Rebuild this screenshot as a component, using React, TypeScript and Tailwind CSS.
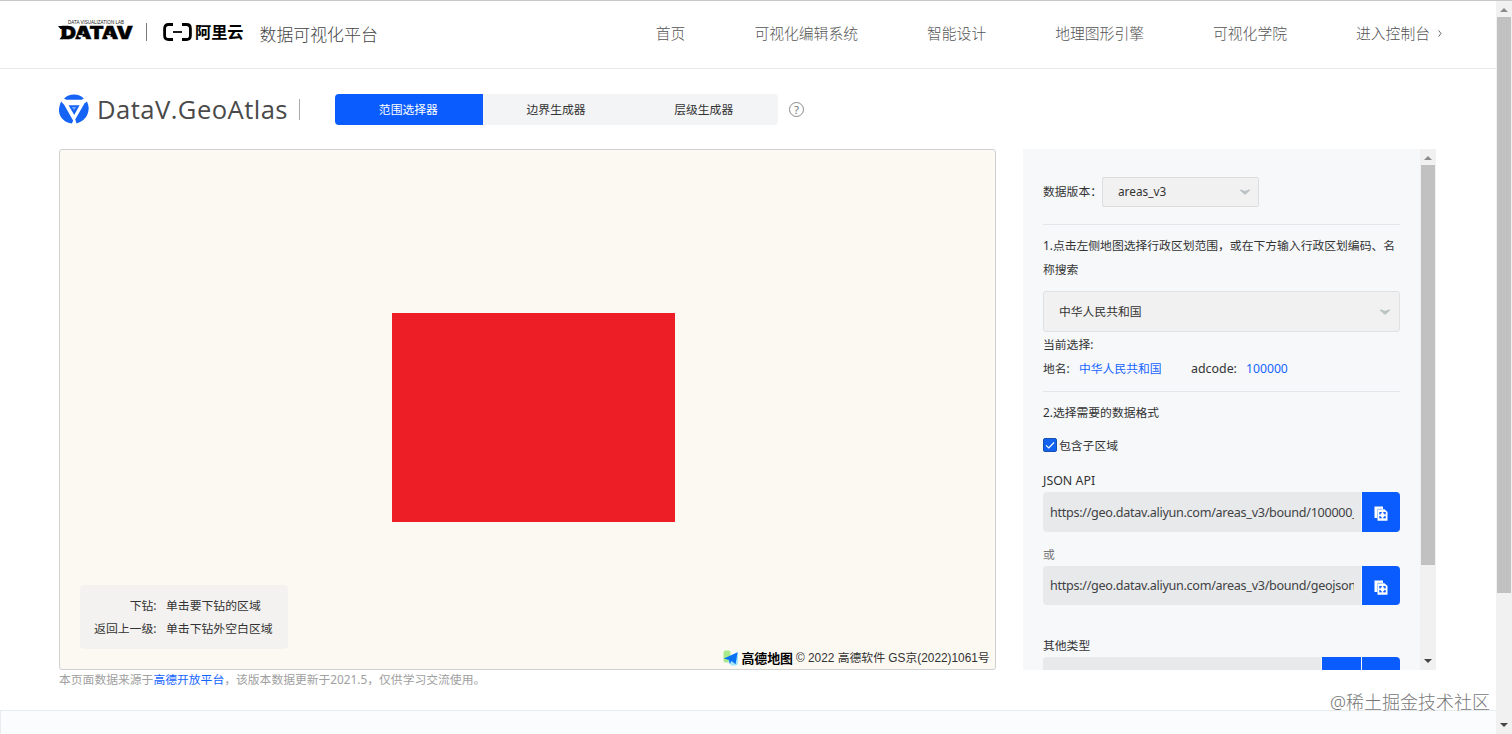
import React from 'react';

const NAV_ITEMS = ['首页', '可视化编辑系统', '智能设计', '地理图形引擎', '可视化学院', '进入控制台'];
const TABS = ['范围选择器', '边界生成器', '层级生成器'];

const DatavLogo = () => (
  <svg className="w-[76px] h-[24px]" viewBox="0 0 76 24">
    <text x="10" y="5.2" fontSize="5" textLength="56" lengthAdjust="spacingAndGlyphs" fill="#222" fontFamily="Liberation Sans">
      DATA VISUALIZATION LAB
    </text>
    <text x="3" y="20" fontSize="17.6" fontWeight="900" textLength="72" lengthAdjust="spacingAndGlyphs" fill="#000" stroke="#000" strokeWidth="0.5" fontFamily="Inter">
      DATAV
    </text>
    <path d="M0 7H8V10H2.5Z" />
    <path d="M1.5 20.2L4.5 16.5V20.2Z" />
    <path d="M20 16.2H25L24 18.2H21Z M48 16.2H53L52 18.2H49Z" fill="#fff" />
  </svg>
);

const AliyunLogo = () => (
  <div className="flex items-center">
    <svg className="w-[29px] h-[18px]" viewBox="0 0 29 18" fill="none" stroke="#000" strokeWidth="2.8">
      <path d="M10 1.5H5.5Q1.6 1.5 1.6 5.5V12.5Q1.6 16.5 5.5 16.5H10" />
      <path d="M19 1.5H23.5Q27.4 1.5 27.4 5.5V12.5Q27.4 16.5 23.5 16.5H19" />
      <path d="M10 9H19" strokeWidth="1.8" />
    </svg>
    <span className="ml-[3px] text-[16.2px] leading-[20px] font-bold text-black">阿里云</span>
  </div>
);

const GeoAtlasLogo = () => (
  <svg className="w-[30px] h-[30px] -mt-[2px]" viewBox="0 0 30 30" fill="#1664f5">
    <path d="M5 4.6Q9 0.5 15 0.5T24.8 4.4L22.6 5.8H7.4Z" />
    <path d="M2 7.4L5 10.5 14.2 26.8 12.8 29.4Q5.5 28.6 1.9 23T1.2 10Z" />
    <path d="M28 7.4Q31 13.5 28.6 20T17.6 29.4L16.2 25.4 25.4 9.4Z" />
    <path d="M9.6 11.2H20.6L15.2 21Z" />
    <path d="M12.6 13H17.4L15 16Z" fill="#78a4fa" />
  </svg>
);

const AmapLogo = () => (
  <svg className="w-[17px] h-[16px]" viewBox="0 0 17 16">
    <rect x="0.5" y="0.5" width="7" height="12" rx="2" fill="#a9ea8d" />
    <path d="M5 11L15 2V13Q15 15.5 12 15.5H8Z" fill="#a5e5fa" />
    <path d="M0.8 8.4L14.6 2.2L12.6 14.2L8.6 11L6.8 14L6 10Z" fill="#0a73f5" />
  </svg>
);

const CopyIcon = () => (
  <svg className="w-[14px] h-[15px]" viewBox="0 0 14 15">
    <path d="M0.5 0.5H9V3H4V12H0.5Z" fill="#fff" />
    <path d="M3.5 3.2H10.5L13.5 6V14.7H3.5Z" fill="#fff" />
    <rect x="6" y="6.7" width="5" height="5" fill="none" stroke="#0b5cff" strokeWidth="1.4" />
    <path d="M8.5 5.5V8M8.5 10.5V13M4.8 9.2H7.2M9.8 9.2H12.2" stroke="#fff" strokeWidth="1.6" />
    <path d="M3.5 12V3.2H8" fill="none" stroke="#8fb4ff" strokeWidth="0.7" />
  </svg>
);

const SelectArrow = () => (
  <svg className="w-[12px] h-[6px]" viewBox="0 0 12 6">
    <path d="M0.5 1Q2 0 3.5 1L6 2L8.5 1Q10 0 11.5 1L6.8 5.2Q6 5.8 5.2 5.2Z" fill="#bac3c4" />
  </svg>
);

interface ScrollbarProps {
  className: string;
  thumbClassName: string;
}

const Scrollbar = ({ className, thumbClassName }: ScrollbarProps) => (
  <div className={`flex flex-col items-center shrink-0 bg-[#f1f1f1] ${className}`}>
    <div className="h-4 flex items-center shrink-0">
      <svg className="w-2 h-1 mt-px" viewBox="0 0 8 4"><path d="M0 4L4 0L8 4Z" fill="#8c8c8c" /></svg>
    </div>
    <div className={`bg-[#c1c1c1] ${thumbClassName}`}></div>
    <div className="h-[17px] mt-auto flex items-center shrink-0">
      <svg className="w-2 h-1 -mt-px" viewBox="0 0 8 4"><path d="M0 0L4 4L8 0Z" fill="#454545" /></svg>
    </div>
  </div>
);

interface UrlFieldProps {
  url: string;
}

const UrlField = ({ url }: UrlFieldProps) => (
  <div className="flex h-[39.5px] gap-px">
    <div className="w-[318px] flex items-center rounded-l bg-[#e8e9eb] pl-[7px] pr-[7px] pt-[2px]">
      <span className="w-[304px] overflow-hidden whitespace-nowrap text-[12.6px] tracking-[-0.29px] leading-5 text-[#404244]">{url}</span>
    </div>
    <div className="w-[38px] flex items-center justify-center rounded-r bg-[#0b5cff] pt-1">
      <CopyIcon />
    </div>
  </div>
);

const Header = () => (
  <header className="flex items-center h-[69px] shrink-0 border-t border-t-[#c8c8c8] border-b border-b-[#e9e9e9] pl-[58px]">
    <div className="flex items-center -mt-[7px]">
      <DatavLogo />
      <div className="w-px h-[18px] ml-[12px] mr-[16px] mt-[2px] bg-[#777]"></div>
      <div className="mt-[2px]"><AliyunLogo /></div>
    </div>
    <div className="ml-[16px] text-[16.9px] leading-6 text-[#454545] font-light whitespace-nowrap">数据可视化平台</div>
    <nav className="flex items-center gap-[69px] ml-auto mr-[54px] -mt-[3px] text-[14.8px] leading-6 font-light text-[#555] whitespace-nowrap">
      {NAV_ITEMS.map((item, index) => (
        <div key={item} className="flex items-center">
          {item}
          {index === NAV_ITEMS.length - 1 && (
            <svg className="w-[4px] h-[7px] ml-[8px] mt-px" viewBox="0 0 4 7" fill="none" stroke="#666">
              <path d="M0.7 0.5L3 3.5L0.7 6.5" />
            </svg>
          )}
        </div>
      ))}
    </nav>
  </header>
);

const TitleBar = () => (
  <div className="flex items-center h-[31px] mt-[25px]">
    <GeoAtlasLogo />
    <span className="w-[202px] ml-[8px] -mt-px text-[25.6px] tracking-[0.45px] leading-[31px] text-[#4a4a4a] whitespace-nowrap font-['Open_Sans','Noto_Sans',sans-serif]">DataV.GeoAtlas</span>
    <div className="w-px h-[21px] bg-[#aaa]"></div>
    <div className="flex ml-[35px] h-[31px] rounded bg-[#f2f4f5] overflow-hidden text-[11.8px]">
      {TABS.map((tab, index) => (
        <div
          key={tab}
          className={`w-[147.7px] flex items-center justify-center pr-px ${index === 0 ? 'bg-[#0b5cff] text-white' : 'text-[#333]'}`}
        >
          {tab}
        </div>
      ))}
    </div>
    <div className="ml-[11px] w-[15px] h-[15px] rounded-full border border-[#8a8a8a] flex items-center justify-center text-[11.5px] leading-none text-[#777]">?</div>
  </div>
);

const MapPanel = () => (
  <div className="relative w-[937px] h-[521px] shrink-0 border border-[#cfd0d2] rounded-[3px] bg-[#fcf9f2]">
    <div className="absolute left-[332px] top-[163px] w-[283px] h-[209px] bg-[#ee1e27]"></div>
    <div className="absolute left-[20px] top-[435px] w-[208px] h-[64px] rounded bg-[#f3f2f0] pt-[8.5px] text-[11.85px] leading-[23px] text-[#333] whitespace-nowrap">
      <div className="flex">
        <span className="w-[76.5px] text-right">下钻:</span>
        <span className="ml-[9.5px]">单击要下钻的区域</span>
      </div>
      <div className="flex">
        <span className="w-[76.5px] text-right">返回上一级:</span>
        <span className="ml-[9.5px]">单击下钻外空白区域</span>
      </div>
    </div>
    <div className="absolute right-[5px] bottom-[1px] flex items-center h-5 whitespace-nowrap">
      <AmapLogo />
      <span className="ml-px -mt-px text-[12.9px] leading-4 font-bold text-black">高德地图</span>
      <span className="ml-[3px] -mt-px w-[194px] text-[11.85px] leading-4 text-[#333] font-['Liberation_Sans','Noto_Sans_CJK_SC',sans-serif]">© 2022 高德软件 GS京(2022)1061号</span>
    </div>
  </div>
);

const SidePanel = () => (
  <div className="flex w-[413px] h-[521px] shrink-0 overflow-hidden bg-[#f6f8fa]">
    <div className="w-[357px] ml-[20px] shrink-0 text-[11.8px] leading-[24px] text-[#333]">
      <div className="flex items-center mt-[28px] h-[30px]">
        <span className="w-[59px] -mt-[2px] whitespace-nowrap">数据版本：</span>
        <div className="flex items-center justify-between w-[157px] h-[30px] border border-[#dcdee0] rounded-[2px] bg-[#f1f1f1] pl-[15px] pr-[7px]">
          <span className="-mt-[2px]">areas_v3</span>
          <SelectArrow />
        </div>
      </div>
      <div className="mt-[17px] border-t border-[#e3e5e8]"></div>
      <p className="mt-[8px] mb-[10px]">1.点击左侧地图选择行政区划范围，或在下方输入行政区划编码、名称搜索</p>
      <div className="flex items-center justify-between h-[41px] border border-[#dfe2e4] rounded-[3px] bg-[#f1f1f1] pl-[15px] pr-[8px]">
        <span className="-mt-[2px]">中华人民共和国</span>
        <SelectArrow />
      </div>
      <div>当前选择:</div>
      <div className="flex whitespace-nowrap">
        <span className="w-[36px]">地名:</span>
        <span className="w-[112px] text-[#1664ff]">中华人民共和国</span>
        <span className="w-[55px] mt-px -mb-px text-[12.4px]">adcode:</span>
        <span className="mt-px -mb-px text-[12.2px] text-[#1664ff]">100000</span>
      </div>
      <div className="mt-[11px] border-t border-[#e3e5e8]"></div>
      <div className="mt-[8px]">2.选择需要的数据格式</div>
      <div className="flex items-center mt-[9px]">
        <svg className="w-[14px] h-[14px]" viewBox="0 0 14 14">
          <rect x="0.5" y="0.5" width="13" height="13" rx="1.5" fill="#1463f0" stroke="#174fae" />
          <path d="M3 7.3L5.8 10L11 4.5" fill="none" stroke="#fff" strokeWidth="1.1" />
        </svg>
        <span className="ml-[2px]">包含子区域</span>
      </div>
      <div className="mt-[13px] h-[22px] text-[12.4px] leading-[22px]">JSON API</div>
      <UrlField url="https://geo.datav.aliyun.com/areas_v3/bound/100000_full.json" />
      <div className="mt-[10px] text-[#777]">或</div>
      <UrlField url="https://geo.datav.aliyun.com/areas_v3/bound/geojson?code=100000_full" />
      <div className="mt-[28px]">其他类型</div>
      <div className="flex gap-px h-[40px]">
        <div className="w-[278px] rounded-l bg-[#e8e9eb]"></div>
        <div className="w-[39px] bg-[#0b5cff]"></div>
        <div className="w-[38px] rounded-r bg-[#0b5cff]"></div>
      </div>
    </div>
    <Scrollbar className="w-[16px] ml-auto" thumbClassName="w-[14px] h-[400px]" />
  </div>
);

const App = () => (
  <div className="relative flex w-[1512px] h-[734px] overflow-hidden bg-white font-['Noto_Sans','Noto_Sans_CJK_SC',sans-serif]">
    <div className="flex flex-col w-[1496px]">
      <Header />
      <main className="h-[641px] shrink-0 pl-[59px]">
        <TitleBar />
        <div className="flex mt-[24px] gap-[27px]">
          <MapPanel />
          <SidePanel />
        </div>
        <p className="text-[11.8px] leading-[19px] text-[#a0a0a0]">
          本页面数据来源于<span className="text-[#1664ff]">高德开放平台</span>，该版本数据更新于2021.5，仅供学习交流使用。
        </p>
      </main>
      <footer className="h-6 shrink-0 border-t border-l border-[#e9ecee] bg-[#fafcfe]"></footer>
    </div>
    <Scrollbar className="w-[16px] border-t border-[#c8c8c8]" thumbClassName="w-[14px] h-[576px]" />
    <div className="absolute left-[1330px] top-[690px] text-[18px] leading-6 font-light text-[#777] whitespace-nowrap">@稀土掘金技术社区</div>
  </div>
);

export default App;
